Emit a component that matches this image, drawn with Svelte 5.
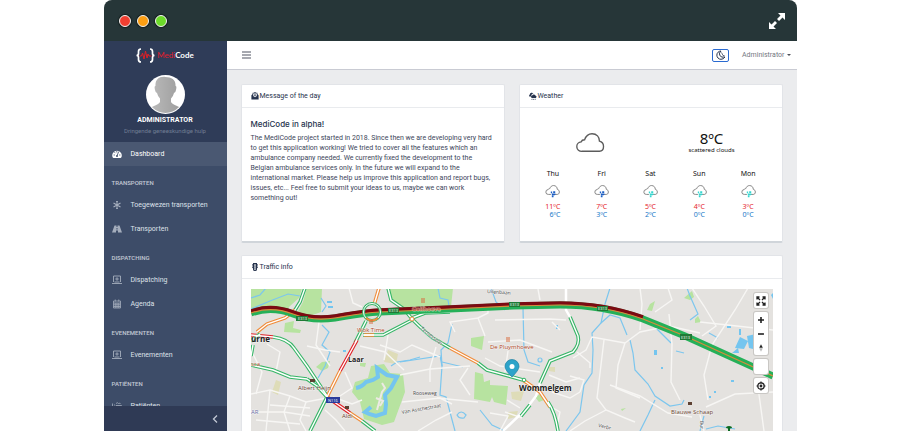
<script>
  const groups = [
    { title: 'Transporten', items: [['asterisk', 'Toegewezen transporten'], ['road', 'Transporten']] },
    { title: 'Dispatching', items: [['laptop', 'Dispatching'], ['calendar', 'Agenda']] },
    { title: 'Evenementen', items: [['laptop', 'Evenementen']] },
    { title: 'Patiënten', items: [['patient', 'Patiënten']] }
  ];

  const forecast = [
    { day: 'Thu', high: 11, low: 6, drops: '#1c5fc4' },
    { day: 'Fri', high: 7, low: 3, drops: '#1c5fc4' },
    { day: 'Sat', high: 5, low: 2, drops: '#35d6cf' },
    { day: 'Sun', high: 4, low: 0, drops: '#35d6cf' },
    { day: 'Mon', high: 3, low: 0, drops: '#35d6cf' }
  ];

  const G = '#35b566';
  const O = '#f08c3a';
  const R = '#e01f26';

  const streets = [
    'M251 394L270 390L290 396L306 402L327 398', 'M270 390L266 431', 'M290 396L284 412L290 431', 'M306 402L300 420L306 431',
    'M251 412L284 412L310 416', 'M267 344L280 352L276 372', 'M307 346L325 350L340 352', 'M333 397L352 404L362 400',
    'M345 372L352 388L340 396', 'M349 288L353 303L362 307', 'M319 322L316 345L330 366', 'M380 345L400 352L412 345L440 357',
    'M388 335L384 360', 'M360 346L385 352L404 370', 'M325 410L336 420L345 431', 'M400 375L430 369L470 366', 'M402 402L440 398L452 404',
    'M455 332L450 322L478 318L485 336', 'M478 318L488 313L488 308', 'M488 342L520 340L552 352', 'M508 351L505 372', 'M485 358L500 366L540 372',
    'M436 347L430 368L430 382', 'M468 368L460 380L470 395', 'M490 413L508 416L500 431', 'M507 400L520 408', 'M505 412L522 418', 'M549 375L566 382L580 378',
    'M552 392L570 398L580 392', 'M548 405L560 412L556 431', 'M495 320L550 319L566 320', 'M418 431L436 420L452 412', 'M437 398L478 402',
    'M573 358L586 350L592 337L625 343', 'M604 340L597 398L606 410L625 418L635 422', 'M606 410L585 421L570 431', 'M570 376L584 380L580 392', 'M577 352L590 363L590 368',
    'M640 288L642 304L640 330', 'M625 343L640 332L669 326L700 333', 'M625 343L618 365L616 388L640 398', 'M610 385L640 396L668 413L692 417',
    'M669 314L672 344L671 382L680 400', 'M692 288L704 306L716 326L702 336', 'M748 288L735 310L712 345L704 375L708 400', 'M700 322L773 330',
    'M706 407L735 394L773 392', 'M757 380L764 431', 'M700 415L704 431', 'M668 288L672 300L655 312',
    'M251 350L262 372L256 394', 'M256 420L300 424', 'M270 405L310 408', 'M540 300L538 289', 'M560 330L552 322'
  ];

  const waterways = [
    'M251 309L270 301L288 294L300 296', 'M266 288L260 295L251 298', 'M322 325L329 332L322 345L330 352L325 366L318 378', 'M321 298L326 306L322 312',
    'M391 366L397 362L410 360L420 357', 'M400 362L440 356L442 366L440 395L446 397L455 431', 'M442 362L463 367', 'M452 324L448 343L441 350L442 366',
    'M491 288L496 302L505 310', 'M523 308L524 350L528 362L540 366', 'M566 431L580 412L584 385L592 373L593 350L592 333L601 323L605 304L610 288',
    'M601 323L610 315L620 318L627 335', 'M630 340L633 353L635 370L648 384L655 396L670 406L682 404L684 400', 'M655 400L648 415L640 431',
    'M655 327L663 335L671 343', 'M687 288L690 296L698 314L690 320', 'M676 351L684 353', 'M704 416L700 431', 'M709 333L718 338',
    'M480 410L492 425L505 431', 'M706 429L718 426L735 429', 'M438 288L440 298L448 300L449 306'
  ];

  const roads = [
    [G, 'M305 288L300 302L295 310'], [O, 'M295 310L285 318L267 324L257 332'], [R, 'M251 335L273 337'],
    [G, 'M251 341L260 334'], [G, 'M273 337Q288 339 294 348L307 366L327 396'], [R, 'M327 397L350 413'], [O, 'M350 413L362 421'], [G, 'M362 421L375 431'],
    [G, 'M253 345L251 356'], [G, 'M251 365L273 370L290 377L307 379'], [G, 'M307 379L317 386L327 397'],
    [G, 'M327 397L310 431'], [O, 'M379 288L374 305'], [G, 'M366 321L355 343'], [R, 'M357 340L340 371'], [O, 'M340 371L327 397'],
    [G, 'M363 335L383 335L412 320'], [O, 'M364 335L374 335'], [G, 'M388 288L391 300L404 309L412 319'],
    [G, 'M412 319Q425 332 433 338L450 348'], [O, 'M450 348L478 363'], [G, 'M478 363L487 370L523 380'], [O, 'M523 380L540 392L550 407'], [G, 'M548 402Q555 412 558 431'],
    [G, 'M412 318L425 313L450 312'], [G, 'M570 317L578 336Q580 344 573 352L550 361L540 383'], [G, 'M530 405L521 416']
  ];

  const highway = 'M251 313C265 308 280 309 293 314S322 320 335 318S360 313 380 312L450 309L513 306L560 305C590 305 615 309 643 319L685 336L773 376';
  const jam = 'M251 311C265 306 280 307 293 312S322 318 335 316S360 311 380 310L450 307L513 304L560 303C590 303 615 307 643 317';
</script>

{#snippet cloud(color, width)}
  <path d="M10 30a7 7 0 0 1-1-14c1-3 4-3 5-3c2-6 6-9 11-9c7 0 11 5 11 11c4 1 6 4 6 8c0 5-3 7-6 7z" fill="none" stroke={color} stroke-width={width} />
{/snippet}

{#snippet icon(name)}
  <svg class="icon" viewBox="0 0 20 20" fill="none" stroke="currentColor" stroke-width="1.6" aria-hidden="true">
    {#if name === 'gauge'}
      <path d="M1 16a9.500 9.500 0 1 1 18 0q-1 2-2 2H3q-1 0-2-2z" fill="currentColor" stroke="none" />
      <path d="M10 14L13 6M4 12h1M5.500 7l.8.8M9.500 5v1M15 12h1" stroke="#4a5872" stroke-width="1.800" stroke-linecap="round" />
      <circle cx="10" cy="14" r="2" fill="#4a5872" stroke="none" />
    {:else if name === 'asterisk'}
      <path d="M10 2v16M3 6l14 8M17 6L3 14" stroke-width="2.200" /><path d="M8 2l2 2l2-2M8 18l2-2l2 2" />
    {:else if name === 'road'}
      <path d="M5 3h4v3h2V3h4l5 14h-8v-4H8v4H0zM9 8v3h2V8z" fill="currentColor" fill-rule="evenodd" stroke="none" />
    {:else if name === 'laptop'}
      <path d="M3 14V2h14v12M0 17h20M10 4.500v7M6.500 8h7M5 14h10" stroke-width="1.800" />
    {:else if name === 'calendar'}
      <path d="M3 4h14v14H3zM3 8h14M3 11.500h14M3 15h14M6.500 8v10M10 8v10M13.500 8v10M6.500 1v4M13.500 1v4" />
    {:else if name === 'patient'}
      <path d="M1 5v13M1 14h18v4M19 14V9H8v5M4 8h2M8 5q3-3 5 0q3-2 4 1" />
    {:else if name === 'mail'}
      <path d="M1 8l3-3V2h3l3-2l3 2h3v3l3 3v11H1z" fill="currentColor" stroke="none" /><path d="M5.500 4h9v6L10 13l-4.500-3z" fill="#fff" stroke="none" /><path d="M10 5v6M7 8h6" />
    {:else if name === 'weather'}
      <path d="M2 12a3.500 3.500 0 0 1 0-6a5 5 0 0 1 9-2a5 5 0 0 0-5 5q-2 1-2 3z" fill="currentColor" stroke="none" /><path d="M8 15a3 3 0 0 1 0-6a4.500 4.500 0 0 1 8-.5a3.500 3.500 0 0 1 1 6.500z" fill="currentColor" stroke="none" /><path d="M8 17l-1 3M12 17l-1 3M16 17l-1 3" />
    {:else if name === 'light'}
      <path d="M5 0h10v3h2v3l-2 1v2h2v3l-2 1v3q0 4-5 4t-5-4v-3l-2-1V9h2V7L3 6V3h2z" fill="currentColor" stroke="none" /><path d="M10 4v2M10 9v2M10 14v2" stroke="#fff" stroke-width="3" stroke-linecap="round" />
    {/if}
  </svg>
{/snippet}

<div class="window">
  <div class="titlebar">
    <div class="lights"><i class="red"></i><i class="amber"></i><i class="green"></i></div>
    <button class="expand" aria-label="Full screen">
      <svg viewBox="0 0 16 16" fill="#fff"><path d="M9 0h7v7l-2.500-2.500L10 8L8 6l3.500-3.500zM7 16H0V9l2.500 2.500L6 8l2 2l-3.500 3.500z" /></svg>
    </button>
  </div>

  <div class="app">
    <aside>
      <div class="profile">
        <a class="logo" href="#home">
          <svg viewBox="0 0 19 15" fill="none" aria-hidden="true">
            <path d="M5 1Q2.500 1 2.500 3.500V5.500Q2.500 7.500 .5 7.500Q2.500 7.500 2.500 9.500V11.500Q2.500 14 5 14M14 1Q16.500 1 16.500 3.500V5.500Q16.500 7.500 18.500 7.500Q16.500 7.500 16.500 9.500V11.500Q16.500 14 14 14" stroke="#fff" stroke-width="1.700" />
            <path d="M3.500 8h2l1-3l1.500 6L9.500 3l1.500 7l1-4l1 2h2.500" stroke="#e01f26" />
          </svg>
          <span><em>Medi</em>Code</span>
        </a>
        <svg class="avatar" viewBox="0 0 39 39" role="img" aria-label="Profile picture">
          <defs>
            <clipPath id="face"><circle cx="19.500" cy="19.500" r="18.500" /></clipPath>
            <linearGradient id="shade"><stop stop-color="#bdbdbd" /><stop offset="1" stop-color="#9b9b9b" /></linearGradient>
          </defs>
          <circle cx="19.500" cy="19.500" r="19.500" fill="#fff" />
          <path clip-path="url(#face)" fill="url(#shade)" d="M19.500 2C13 1 9 5 9.500 11Q8 11 9 15Q9.500 18 11 18Q12 22 14 23.500V27Q13 29 8 31Q3 33 2 39H37Q36 33 31 31Q26 29 25 27V23.500Q27 22 28 18Q29.500 18 30 15Q31 11 29.500 11C30 5 26 2 19.500 2z" />
        </svg>
        <strong>ADMINISTRATOR</strong>
        <small>Dringende geneeskundige hulp</small>
      </div>
      <nav>
        <a class="item active" href="#dashboard">{@render icon('gauge')}Dashboard</a>
        {#each groups as group}
          <h2>{group.title}</h2>
          {#each group.items as [name, label]}
            <a class="item" href="#{label}">{@render icon(name)}{label}</a>
          {/each}
        {/each}
      </nav>
      <button class="collapse" aria-label="Collapse sidebar">
        <svg viewBox="0 0 6 8" fill="none" stroke="#c3c9d5" stroke-width="1.300"><path d="M5 .5L1.500 4L5 7.500" /></svg>
      </button>
    </aside>

    <div class="main">
      <header>
        <button class="burger" aria-label="Menu"><svg viewBox="0 0 9 8" stroke="#8a8d96" stroke-width="1.300"><path d="M0 1h9M0 4h9M0 7h9" /></svg></button>
        <div class="tools">
          <button class="theme" aria-label="Dark mode">
            <svg viewBox="0 0 10 10" fill="none" stroke="#26334d" stroke-width="1"><path d="M5 1Q2.500 3 3.800 5.500Q5.500 8 9 7Q7.500 9.300 5 9.300A4.100 4.100 0 0 1 5 1z" /><path d="M5.500 2.500L7 5.500L8.500 5.500" stroke-width=".7" /></svg>
          </button>
          <button class="user">Administrator <i></i></button>
        </div>
      </header>

      <main>
        <section class="card">
          <h3>{@render icon('mail')}Message of the day</h3>
          <div class="body">
            <h4>MediCode in alpha!</h4>
            <p>The MediCode project started in 2018. Since then we are developing very hard to get this application working! We tried to cover all the features which an ambulance company needed. We currently fixed the development to the Belgian ambulance services only. In the future we will expand to the international market. Please help us improve this application and report bugs, issues, etc... Feel free to submit your ideas to us, maybe we can work something out!</p>
          </div>
        </section>

        <section class="card">
          <h3>{@render icon('weather')}Weather</h3>
          <div class="body weather">
            <div class="now">
              <svg viewBox="0 0 44 34" role="img" aria-label="Cloudy">{@render cloud('#5c5c5c', 2)}</svg>
              <div><b>8ºC</b><span>scattered clouds</span></div>
            </div>
            <div class="days">
              {#each forecast as f}
                <div class="day">
                  <span>{f.day}</span>
                  <svg viewBox="0 0 44 40" aria-hidden="true">
                    {@render cloud('#707070', 2.4)}
                    <path d="M13 22h19l-9 18z" fill="#fff" />
                    <path d="M17 24h4M24 23h6M20 30h9M20 36h5M28 27v5" stroke={f.drops} stroke-width="5" />
                  </svg>
                  <div class="temps"><span class="high">{f.high}ºC</span><span class="low">{f.low}ºC</span></div>
                </div>
              {/each}
            </div>
          </div>
        </section>

        <section class="card wide">
          <h3>{@render icon('light')}Traffic info</h3>
          <div class="body">
            <div class="map">
              <svg class="canvas" viewBox="251 289 522 142" role="img" aria-label="Traffic map of Wommelgem">
                <rect x="251" y="289" width="522" height="142" fill="#e4e2df" />
                <g fill="#b7e3a0">
                  <path d="M251 288H302L299 298L290 306L284 313Q268 306 251 309zM307 288H322L321 312L310 316L297 313L303 302z" />
                  <path d="M388 288H453L451 307L400 310L396 303L390 299z" />
                  <path d="M285 323L294 321L293 328L301 330L300 333L284 332zM316 367L322 362L330 361L328 368L322 371zM360 363h6l-1 4l-5-1z" />
                  <path d="M371 366L384 364L390 373L403 374L405 392L394 422L382 425L364 419L360 402L352 392L355 382L368 378z" />
                  <path d="M471 338L484 336L482 350L471 346zM475 372L483 374L484 382L490 380V385L508 386L506 405L494 402L492 397L490 402L474 399zM400 373L404 385L400 399zM535 397L542 393L544 400L539 402z" />
                  <path d="M650 304L655 301L652 311L647 310zM684 298L692 291L694 297L690 300zM695 319L698 316L701 322L695 323zM621 409l5-1l-4 3z" />
                </g>
                <path fill="#dedcb8" d="M388 350L398 354L396 364L384 362zM276 380L281 382L278 395L272 392zM511 392L524 391L521 401L512 399zM508 412L518 411L516 417L508 419zM549 367L555 367L555 372L549 371z" />
                <path fill="none" stroke="#74c5ef" stroke-width="4" d="M356 388Q362 387 366 382L373 380L378 377L377 368L387 375L397 377L391 388L385 395L386 404L385 413L376 416L369 414L365 412L371 407" />
                <path d="M382 383L385 388L382 392L377 410M376 398L383 401L380 406" stroke="#ece9e4" stroke-width="2" fill="none" />
                <g fill="#74c5ef"><path d="M735 348L740 337L748 341L744 349zM747 336L756 334L757 350L749 348zM732 353L738 348L739 353zM654 350h3v5h-3zM327 301h5v2h-5zM328 306h5v2h-5zM343 350h3v2h-3zM739 329h2v6h-2zM727 326h4v2h-4zM731 380h3v2h-3zM714 391h2v2h-2zM661 367h2v2h-2zM709 396h2v2h-2zM556 325h2v4h-2zM771 295l2-2v6z" /></g>
                <g class="water">{#each waterways as d}<path {d} />{/each}<circle cx="540" cy="360" r="2" /><path d="M457 415q4-6 9 0l-2 3q-5 1-7-3z" /></g>
                <g class="street">{#each streets as d}<path {d} />{/each}</g>
                <path d="M566 288V310L570 317M540 383L536 396L527 408L503 431" fill="none" stroke="#fff" stroke-width="2.500" />
                <g class="road">{#each roads as [color, d]}<path {d} stroke={color} />{/each}</g>
                <g class="road inner">{#each roads as [, d]}<path {d} stroke="#fff" />{/each}</g>
                <g fill="none">
                  <path d={highway} stroke="#25b058" stroke-width="7" />
                  <path d={jam} stroke="#7c0a12" stroke-width="3.500" />
                  <path d={highway} stroke="#d98a3c" stroke-width="1.200" />
                  <circle cx="372" cy="312" r="8.500" stroke={G} stroke-width="3" />
                  <circle cx="372" cy="312" r="8.500" stroke="#fff" stroke-width="1" />
                  <path d="M366 318q6 5 12 0" stroke={O} stroke-width="2" />
                  <circle cx="524" cy="380" r="1.800" fill="#fff" stroke={G} />
                  <circle cx="412" cy="319" r="2" fill="#fff" stroke={O} />
                </g>
                <g fill="#1e7a36"><rect x="296" y="316" width="12" height="5" /><rect x="388" y="308" width="11" height="5" /><rect x="509" y="302" width="11" height="5" /><rect x="597" y="306" width="11" height="5" /><rect x="680" y="334" width="12" height="6" /></g>
                <rect x="326" y="397" width="14" height="6" fill="#2a3c9c" />
                <g class="shield"><text x="298" y="320">E313</text><text x="389" y="312">E313</text><text x="510" y="306">E313</text><text x="598" y="310">E313</text><text x="681" y="339">E313</text><text x="328" y="402">N116</text></g>
                <g class="town"><text x="251" y="342">urne</text><text x="519" y="391">Wommelgem</text></g>
                <text class="village" x="348" y="362">Laar</text>
                <g class="food"><text x="357" y="332">Wok Time</text><text x="412" y="311">Golfhoeve</text><text x="490" y="349">De Pluymhoeve</text><text x="251" y="366">sca</text></g>
                <path d="M422 298v5M424 298v5M507 337v5M509 337v5M370 320v4M372 320v4" stroke="#d96b3c" stroke-width="1" />
                <g class="shop"><text x="298" y="390">Albert Heijn</text><text x="342" y="418">Aldi</text><text x="671" y="414">Blauwe Schaap</text></g>
                <path d="M310 379h5v3h-5zM345 406h4v3h-4zM688 402h4v3h-4z" fill="#5d4132" />
                <text class="area" x="251" y="414">AR</text>
                <g class="way"><text x="413" y="395">Rooseweg</text><text x="402" y="414" transform="rotate(-10 402 414)">Van Asschestraat</text><text x="487" y="293" transform="rotate(4 487 293)">Uilenbaan</text><text x="420" y="329" transform="rotate(38 420 329)">Ternesselei</text><text x="598" y="427" transform="rotate(12 598 427)">Verbr</text><text x="700" y="421" transform="rotate(88 700 421)">Bur</text></g>
                <path d="M512 377Q505 370 505 366.500a7 7 0 0 1 14 0Q519 370 512 377z" fill="#2da3c9" stroke="#2280a0" stroke-width=".7" /><circle cx="512" cy="366.500" r="2.500" fill="#fff" />
                <path d="M726 428a3 2 0 0 1 6 0l-2 .5V431h-2v-2.500z" fill="#0c6b22" />
              </svg>
              <div class="controls">
                <div><button aria-label="Toggle full screen"><svg viewBox="0 0 10 10" fill="none" stroke="#222" stroke-width="1.300"><path d="M1 3.500V1h2.500M6.500 1H9v2.500M9 6.500V9H6.500M3.500 9H1V6.500M1 1l3 3M9 1L6 4M9 9L6 6M1 9l3-3" /></svg></button></div>
                <div>
                  <button aria-label="Zoom in"><svg viewBox="0 0 10 10" stroke="#222" stroke-width="1.600"><path d="M2 5h6M5 2v6" /></svg></button>
                  <button aria-label="Zoom out"><svg viewBox="0 0 10 10" stroke="#222" stroke-width="1.600"><path d="M2 5h6" /></svg></button>
                  <button aria-label="Reset bearing"><svg viewBox="0 0 10 10"><path d="M3.200 4.700L5 1.200L6.800 4.700z" fill="#222" /><path d="M3.200 5.300L5 8.800L6.800 5.300z" fill="#bbb" /></svg></button>
                </div>
                <div><button aria-label="Layers"></button></div>
                <div><button aria-label="Find my location"><svg viewBox="0 0 10 10" fill="none" stroke="#222" stroke-width="1.200"><circle cx="5" cy="5" r="3.200" /><path d="M5 .5v2M5 7.500v2M.5 5h2M7.500 5h2" /><circle cx="5" cy="5" r=".8" fill="#222" /></svg></button></div>
              </div>
            </div>
          </div>
        </section>
      </main>
    </div>
  </div>
</div>

<style>
  :global(body) { background: #fff; }
  * { box-sizing: border-box; }
  svg { display: block; }
  button { border: 0; padding: 0; background: none; font: inherit; color: inherit; cursor: pointer; }
  a { color: inherit; text-decoration: none; }
  h2, h3, h4, p { margin: 0; }

  .window { width: 77%; height: 100vh; margin: 0 auto; display: flex; flex-direction: column; overflow: hidden; border-radius: 8px 8px 0 0; font-family: Roboto, sans-serif; font-size: 7px; line-height: 10px; color: #26334d; }
  .titlebar { flex: none; height: 41px; padding: 0 12px 0 15px; display: flex; align-items: center; justify-content: space-between; background: #263638; }
  .lights { display: flex; gap: 6px; }
  .lights i { width: 12px; height: 12px; border: 1px solid #f3f3f3; border-radius: 50%; box-shadow: 0 0 1px 1px #15201f; }
  .red { background: #f23f31; }
  .amber { background: #fc9f13; }
  .green { background: #6cdb2a; }
  .expand svg { width: 16px; height: 16px; }

  .app { flex: 1; min-height: 0; display: flex; }
  aside { flex: none; width: 123px; display: flex; flex-direction: column; background: #3d4c68; color: #dde1e9; }
  .profile { flex: none; height: 101px; padding-top: 6px; display: flex; flex-direction: column; align-items: center; background: #2f3c58; }
  .logo { display: flex; align-items: center; gap: 2px; font-family: Lato, sans-serif; font-size: 8px; font-weight: 700; line-height: 16px; color: #fff; }
  .logo svg { width: 19px; height: 15px; }
  .logo em { font-style: normal; color: #e01f2e; font-weight: 400; }
  .avatar { width: 39px; height: 39px; margin: 12px 0 1px; }
  .profile strong { color: #fff; font-weight: 700; }
  .profile small { margin-top: 1px; font-size: 6px; color: #707d94; }
  nav { flex: 1; min-height: 0; overflow: hidden; }
  .item { height: 24px; padding-left: 8px; display: flex; align-items: center; gap: 9px; }
  .item .icon { width: 10px; height: 10px; color: #a4adbc; }
  .item.active { background: #4a5872; color: #fff; }
  .item.active .icon { color: #fff; }
  h2 { height: 27px; padding: 12px 8px 5px; font-size: 6px; font-weight: 500; text-transform: uppercase; color: #c3c9d5; }
  .collapse { flex: none; height: 25px; padding-right: 9px; display: flex; align-items: center; justify-content: flex-end; background: #2f3a55; }
  .collapse svg { width: 6px; height: 8px; }

  .main { flex: 1; min-width: 0; display: flex; flex-direction: column; background: #ebecee; }
  header { flex: none; height: 29px; padding: 0 6px 0 15px; display: flex; align-items: center; justify-content: space-between; background: #fff; border-bottom: 1px solid #c9cbd3; }
  .burger svg { width: 9px; height: 8px; }
  .tools { display: flex; align-items: center; gap: 13px; }
  .theme { width: 17px; height: 13px; display: grid; place-items: center; border: 1px solid #2a6ad0; border-radius: 2px; }
  .theme svg { width: 10px; height: 10px; }
  .user { display: flex; align-items: center; gap: 2px; color: #74777f; }
  .user i { border: 2px solid transparent; border-top-color: #4c4f58; border-bottom: 0; }

  main { flex: 1; min-height: 0; overflow: hidden; padding: 14px; display: grid; grid-template-columns: 1fr 1fr; grid-auto-rows: max-content; align-content: start; gap: 12px 14px; }
  .card { min-height: 159px; background: #fff; border: 1px solid #e2e4e8; border-bottom: 2px solid #d0d5da; border-radius: 2px; }
  .wide { grid-column: 1 / -1; }
  h3 { height: 23px; padding: 0 9px; display: flex; align-items: center; gap: 1px; border-bottom: 1px solid #e9ebee; font-size: 7px; font-weight: 400; }
  h3 .icon { width: 8px; height: 8px; }
  .body { padding: 10px 9px; }
  h4 { margin-bottom: 3px; font-family: Inter, sans-serif; font-size: 8px; line-height: 12px; font-weight: 500; }
  p { color: #3c465a; }

  .weather { font-family: "Noto Sans", sans-serif; color: #111; }
  .now, .days { display: flex; }
  .now { padding: 12px 0 15px; align-items: center; }
  .now > svg { flex: 1; height: 23px; }
  .now > div { flex: 1; display: flex; flex-direction: column; align-items: center; }
  .now b { font-size: 15px; line-height: 16px; font-weight: 400; }
  .now span { font-size: 6px; line-height: 8px; }
  .day { flex: 1; display: flex; flex-direction: column; align-items: center; }
  .day svg { width: 15px; height: 14px; margin: 5px 0; }
  .temps { display: flex; flex-direction: column; text-align: right; line-height: 8px; }
  .high { color: #e5252b; }
  .low { color: #1878c8; }

  .map { position: relative; }
  .canvas { width: 100%; }
  .water path, .water circle { fill: none; stroke: #7cc6ee; stroke-width: 1.2; }
  .street path { fill: none; stroke: #f7f6f4; stroke-width: 1.4; }
  .road path { fill: none; stroke-width: 3.6; }
  .road.inner path { stroke-width: 1.4; }
  text { font-family: "Open Sans", sans-serif; font-size: 6px; paint-order: stroke; stroke: #ffffff80; stroke-width: 1px; }
  .town text { font-size: 8px; font-weight: 700; fill: #222; }
  .village { font-size: 7px; font-weight: 700; fill: #222; }
  .food text { fill: #b0441c; }
  .shop text { fill: #6a432e; }
  .way text { font-size: 5px; fill: #444; }
  .shield text { font-size: 4px; fill: #fff; stroke: none; }
  .area { fill: #6a6fa8; }
  .controls { position: absolute; top: 4px; right: 5px; display: flex; flex-direction: column; gap: 4px; }
  .controls div { border-radius: 2px; background: #fff; box-shadow: 0 0 0 1px #c9c7c4; }
  .controls button { width: 14px; height: 15px; display: grid; place-items: center; }
  .controls button + button { height: 14px; }
  .controls svg { width: 10px; height: 10px; }
</style>
